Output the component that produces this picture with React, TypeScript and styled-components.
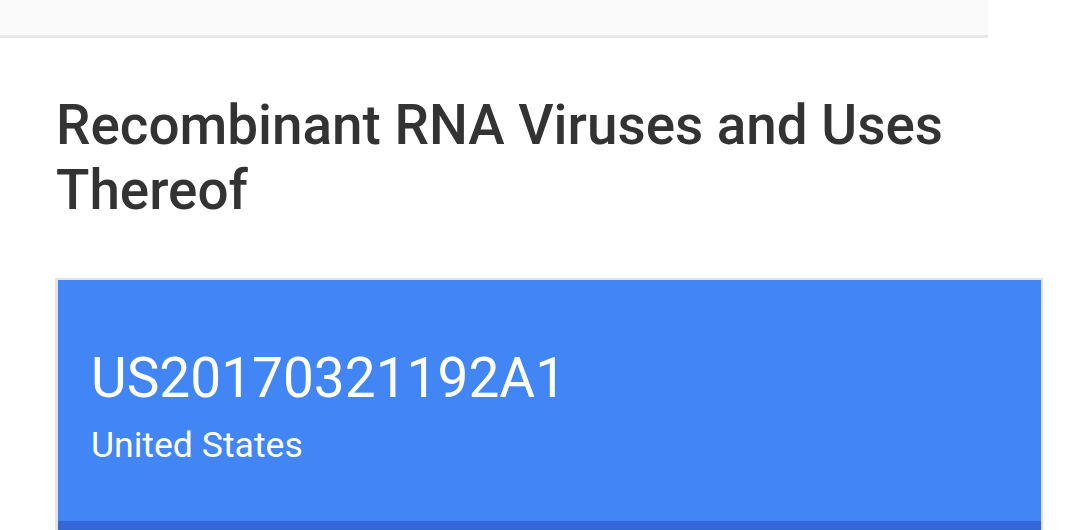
import React from "react";
import styled, { createGlobalStyle } from "styled-components";

const GlobalStyle = createGlobalStyle`
  html, body {
    margin: 0;
    padding: 0;
    background: #ffffff;
    font-family: Roboto, "Noto Sans", Arial, sans-serif;
    overflow: hidden;
  }
`;

const Page = styled.div`
  width: 1080px;
  height: 530px;
  overflow: hidden;
`;

const TopBar = styled.div`
  width: 988px;
  height: 35px;
  background: #fafafa;
  border-bottom: 3px solid #e8e8e8;
`;

const Content = styled.div`
  padding: 0 37px 0 55px;
`;

const Title = styled.h1`
  margin: 55px 0 0 1px;
  font-size: 54.8px;
  line-height: 65px;
  font-weight: 500;
  color: #333333;
  letter-spacing: 0;
`;

const Card = styled.section`
  margin-top: 55px;
  border: 3px solid #e3e3e3;
  border-bottom: none;
  border-right-width: 2px;
  border-top-width: 2px;
  background: #ffffff;
`;

const Header = styled.div`
  background: #4285f4;
  height: 241px;
  box-sizing: border-box;
  padding: 66px 0 0 33px;
  color: #ffffff;
`;

const PatentId = styled.div`
  font-size: 55px;
  line-height: 64px;
  font-weight: 400;
`;

const Country = styled.div`
  margin-top: 15px;
  font-size: 35.6px;
  line-height: 40px;
  font-weight: 400;
`;

const TabStrip = styled.div`
  height: 48px;
  background: #3367d6;
`;

export default function App() {
  return (
    <Page>
      <GlobalStyle />
      <TopBar />
      <Content>
        <Title>Recombinant RNA Viruses and Uses Thereof</Title>
        <Card>
          <Header>
            <PatentId>US20170321192A1</PatentId>
            <Country>United States</Country>
          </Header>
          <TabStrip />
        </Card>
      </Content>
    </Page>
  );
}
